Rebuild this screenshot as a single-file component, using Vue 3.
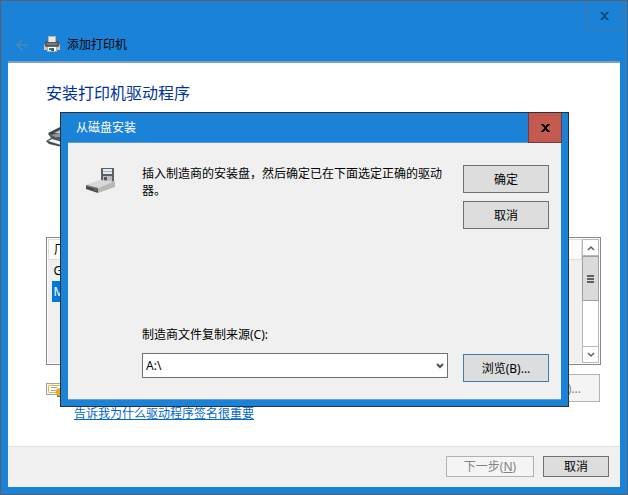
<template>
  <div class="window">
    <header class="titlebar">
      <button type="button" class="back" aria-label="返回" disabled>
        <svg width="14" height="12" viewBox="0 0 14 12" fill="none" stroke="currentColor" stroke-width="2">
          <path d="M13 6H2M7 1L2 6l5 5" />
        </svg>
      </button>
      <svg class="title-icon" width="16" height="16" viewBox="0 0 16 16">
        <path d="M4 0h8v6H4z" fill="#b4b4b0" />
        <path d="M5 1h6v5H5z" fill="#e8e8e6" />
        <path d="M1 6l2-1h1v1h8V5h1l2 1v4H1z" fill="#55585b" />
        <path d="M3 7h10v2H3z" fill="#787b7e" />
        <path d="M0 9l1-1v2h14V8l1 1v5h-3v-3H3v3H0z" fill="#c8c8c6" />
        <path d="M1 10h14v1H1z" fill="#686c70" />
        <path d="M3 11h10v5H3z" fill="#a9abad" />
        <path d="M4 11h8v4H4z" fill="#fafafa" />
        <path d="M5 12h3v2H5z" fill="#227bb6" />
        <path d="M8 12h2v3H7v-1h1z" fill="#2b6a5e" />
      </svg>
      <h1>添加打印机</h1>
      <button type="button" class="close" aria-label="关闭">
        <svg width="9" height="8" viewBox="0 0 9 8" fill="currentColor" shape-rendering="crispEdges">
          <path d="M0 0h3v1h1v1h1V1h1V0h3v1H8v1H7v1H6v2h1v1h1v1h1v1H6V7H5V6H4v1H3v1H0V7h1V6h1V5h1V3H2V2H1V1H0z" />
        </svg>
      </button>
    </header>

    <main class="page">
      <h2>安装打印机驱动程序</h2>

      <div class="hint">
        <svg width="32" height="24" viewBox="0 0 32 24">
          <path d="M14 1h14l-3 8H4L2 7z" fill="#3d444a" />
          <path d="M14 4h11l-3 3H8z" fill="#c2c7cb" />
          <path d="M2 8h4l4 3h16v6l-8 3-8-2z" fill="#53595e" />
          <path d="M5 9l8-2 10 2v2H10z" fill="#8f979d" />
          <path d="M0 15l5-3 18 4-7 5L3 18z" fill="#444a4f" />
          <path d="M2 15l4-2 14 4-5 2z" fill="#f2f4f5" />
        </svg>
      </div>

      <div class="lists">
        <table class="list">
          <thead>
            <tr><th>厂商</th></tr>
          </thead>
          <tbody>
            <tr v-for="name in vendors" :key="name">
              <td><span :class="{ selected: name === vendor }">{{ name }}</span></td>
            </tr>
          </tbody>
        </table>
        <div class="printers">
          <div class="printers-head"></div>
        </div>
        <div class="scrollbar">
          <button type="button" aria-label="向上滚动">
            <svg width="8" height="6" viewBox="0 0 8 6" fill="none" stroke="#606060" stroke-width="1.5">
              <path d="M1 5l3-3 3 3" />
            </svg>
          </button>
          <div class="thumb">
            <svg width="7" height="8" viewBox="0 0 7 8" fill="#606060">
              <path d="M0 0h7v2H0zM0 3h7v2H0zM0 6h7v2H0z" />
            </svg>
          </div>
          <button type="button" class="down" aria-label="向下滚动">
            <svg width="8" height="6" viewBox="0 0 8 6" fill="none" stroke="#606060" stroke-width="1.5">
              <path d="M1 1l3 3 3-3" />
            </svg>
          </button>
        </div>
      </div>

      <div class="signed">
        <svg width="20" height="14" viewBox="0 0 20 14">
          <path d="M0 0h20v12H0z" fill="#a3a3a3" />
          <path d="M1 1h18v10H1z" fill="#f4f4f4" />
          <rect x="2.5" y="2.5" width="12" height="7" rx="1" fill="#fff" stroke="#e8b51a" />
          <path d="M5 4h6v1H5zM5 7h6v1H5z" fill="#9aa1c9" />
          <path d="M11 10h5v4h-5z" fill="#2b80c2" />
          <circle cx="14" cy="9" r="4" fill="#efab10" />
        </svg>
        <a href="#">告诉我为什么驱动程序签名很重要</a>
        <button type="button" class="btn disk" disabled>(H)...</button>
      </div>
    </main>

    <footer class="footer">
      <button type="button" class="btn next" disabled>下一步(<u>N</u>)</button>
      <button type="button" class="btn cancel">取消</button>
    </footer>

    <section class="dialog" role="dialog" aria-labelledby="dialog-title">
      <header class="dialog-title">
        <h2 id="dialog-title">从磁盘安装</h2>
        <button type="button" class="dialog-close" aria-label="关闭">
          <svg width="9" height="8" viewBox="0 0 9 8" fill="currentColor" shape-rendering="crispEdges">
            <path d="M0 0h3v1h1v1h1V1h1V0h3v1H8v1H7v1H6v2h1v1h1v1h1v1H6V7H5V6H4v1H3v1H0V7h1V6h1V5h1V3H2V2H1V1H0z" />
          </svg>
        </button>
      </header>
      <div class="dialog-body">
        <svg class="drive" width="30" height="28" viewBox="0 0 30 28">
          <path d="M0 18l13-5h12l4 1-17 7z" fill="#d9d9d9" />
          <path d="M15 1h13v13l-3 1-10-1z" fill="#5c6064" />
          <path d="M17 2h9v5h-9z" fill="#e6ebef" />
          <path d="M17 4h9v1h-9z" fill="#9db4c6" />
          <path d="M17 9h9v5h-9z" fill="#b9bdc0" />
          <path d="M18 10h3v4h-3z" fill="#54585c" />
          <path d="M12 15l2-2 13 1-10 5z" fill="#d9d9d9" />
          <path d="M12 21l17-7v6l-17 6z" fill="#b8b8b8" />
          <path d="M0 18l12 3v5L0 22z" fill="#4a4a4a" />
          <path d="M0 18l12 3v1L0 19z" fill="#8c8c8c" />
          <path d="M8 22l3 1v1l-3-1z" fill="#2fb82f" />
        </svg>
        <p>插入制造商的安装盘，然后确定已在下面选定正确的驱动器。</p>
        <div class="actions">
          <button type="button" class="btn">确定</button>
          <button type="button" class="btn">取消</button>
        </div>
        <div class="source">
          <label for="source">制造商文件复制来源(C):</label>
          <div class="combo">
            <select id="source" v-model="source">
              <option>A:\</option>
            </select>
            <svg width="8" height="7" viewBox="0 0 8 7" fill="none" stroke="#505050" stroke-width="2">
              <path d="M1 1l3 3 3-3" />
            </svg>
          </div>
        </div>
        <div class="browse">
          <button type="button" class="btn focused">浏览(B)...</button>
        </div>
      </div>
    </section>
  </div>
</template>

<script setup>
import { ref } from 'vue'

const vendors = ['Generic', 'Microsoft']
const vendor = ref('Microsoft')
const source = ref('A:\\')
</script>

<style>
body {
  margin: 0;
}
</style>

<style scoped>
.window {
  position: relative;
  display: flex;
  flex-direction: column;
  box-sizing: border-box;
  min-height: 100vh;
  padding: 0 7px 7px;
  background: #1a83d8;
  border: 1px solid #5c6066;
  font-family: "Noto Sans", "Noto Sans CJK SC", sans-serif;
  font-size: 12px;
  line-height: 17px;
  color: #000;
}

h1,
h2,
p {
  margin: 0;
  font-size: 12px;
  font-weight: 400;
}

button,
select {
  box-sizing: border-box;
  margin: 0;
  padding: 0;
  font: inherit;
  color: inherit;
}

.titlebar {
  display: flex;
  align-items: flex-end;
  box-sizing: border-box;
  height: 62px;
  padding: 0 0 8px 7px;
  border-bottom: 2px solid #7d9fc4;
}

.back {
  display: flex;
  align-items: center;
  height: 16px;
  background: none;
  border: 0;
  color: #4288bd;
}

.title-icon {
  margin: 0 7px 1px 15px;
}

.close {
  display: flex;
  align-items: center;
  justify-content: center;
  align-self: flex-start;
  width: 34px;
  height: 30px;
  margin: 0 -1px 0 auto;
  background: none;
  border: 1px solid #4478a6;
  border-top: 0;
  color: #0f5186;
}

.page {
  flex: 1;
  display: flex;
  flex-direction: column;
  padding: 18px 19px 0 38px;
  background: #fff;
}

.page h2 {
  font-size: 16px;
  line-height: 24px;
  color: #003399;
}

.hint {
  box-sizing: border-box;
  height: 132px;
  padding-top: 21px;
}

.lists {
  display: flex;
  box-sizing: border-box;
  height: 128px;
  padding: 1px;
  background: #f0f0f0;
  border: 1px solid #828790;
  box-shadow: inset 0 0 0 1px #fff;
}

.list {
  width: 45%;
  height: 63px;
  border-collapse: collapse;
}

.list th {
  height: 20px;
  box-sizing: border-box;
  padding: 0 5px;
  background: #fcfcfc;
  border: 1px solid #dedede;
  font-weight: 400;
  text-align: left;
}

.list td {
  height: 21px;
  padding: 0 3px;
}

.list span {
  display: block;
  padding: 2px;
}

.list .selected {
  background: #0078d7;
  color: #fff;
}

.printers {
  flex: 1;
}

.printers-head {
  height: 19px;
  background: #fcfcfc;
  border: 1px solid #dedede;
}

.scrollbar {
  display: flex;
  flex-direction: column;
  width: 17px;
  background: #fff;
  box-shadow: inset 0 0 0 1px #b8b8b8;
}

.scrollbar button,
.thumb {
  display: flex;
  align-items: center;
  justify-content: center;
  box-sizing: border-box;
  height: 17px;
  background: #fff;
  border: 1px solid #b8b8b8;
}

.scrollbar .thumb {
  height: 45px;
  background: #dadada;
  border-color: #a0a0a0;
}

.scrollbar .down {
  margin-top: auto;
}

.signed {
  display: flex;
  align-items: flex-end;
  height: 57px;
}

.signed svg {
  align-self: flex-start;
  margin: 18px 8px 0 0;
}

.signed a {
  color: #0066cc;
}

.signed .disk {
  align-self: flex-start;
  width: auto;
  margin: 9px 1px 0 auto;
  padding: 0 18px;
}

.btn {
  width: 86px;
  height: 28px;
  background: #dddddd;
  border: 1px solid #707070;
}

.btn:disabled {
  background: #f4f4f4;
  border-color: #adb2b5;
  color: #838383;
}

.btn.focused {
  border-color: #3c7fb1;
}

.footer {
  display: flex;
  justify-content: flex-end;
  gap: 9px;
  padding: 9px 11px 10px;
  background: #f0f0f0;
  border-top: 1px solid #dfdfdf;
}

.footer .btn {
  height: 21px;
}

.footer .next {
  width: 88px;
}

.footer .cancel {
  width: 66px;
}

.dialog {
  position: absolute;
  top: 111px;
  left: 59px;
  right: 58px;
  padding: 0 7px 6px;
  background: #1a83d8;
  border: 1px solid #2a3138;
}

.dialog-title {
  display: flex;
  justify-content: space-between;
  height: 29px;
  padding-left: 8px;
  border-bottom: 1px solid #5f9ccb;
  color: #fff;
}

.dialog-title h2 {
  line-height: 29px;
}

.dialog-close {
  display: flex;
  align-items: center;
  justify-content: center;
  width: 34px;
  height: 30px;
  margin-right: -1px;
  background: #c25a50;
  border: 1px solid #6b3c42;
  border-top: 0;
  color: #000;
}

.dialog-body {
  display: grid;
  grid-template-columns: 41px 1fr 86px;
  column-gap: 15px;
  padding: 22px 12px 17px 18px;
  background: #f0f0f0;
  border-bottom: 1px solid #6aa0ca;
}

.drive {
  margin-top: 2px;
}

.actions {
  display: flex;
  flex-direction: column;
  gap: 8px;
}

.source {
  grid-column: 2;
  margin-top: 97px;
}

.source label {
  display: block;
  margin-bottom: 10px;
}

.combo {
  position: relative;
}

.combo select {
  display: block;
  width: 100%;
  height: 25px;
  padding: 0 20px 0 3px;
  appearance: none;
  background: #fff;
  border: 1px solid #707070;
  border-radius: 0;
}

.combo svg {
  position: absolute;
  top: 10px;
  right: 4px;
  pointer-events: none;
}

.browse {
  margin-top: 125px;
}
</style>
